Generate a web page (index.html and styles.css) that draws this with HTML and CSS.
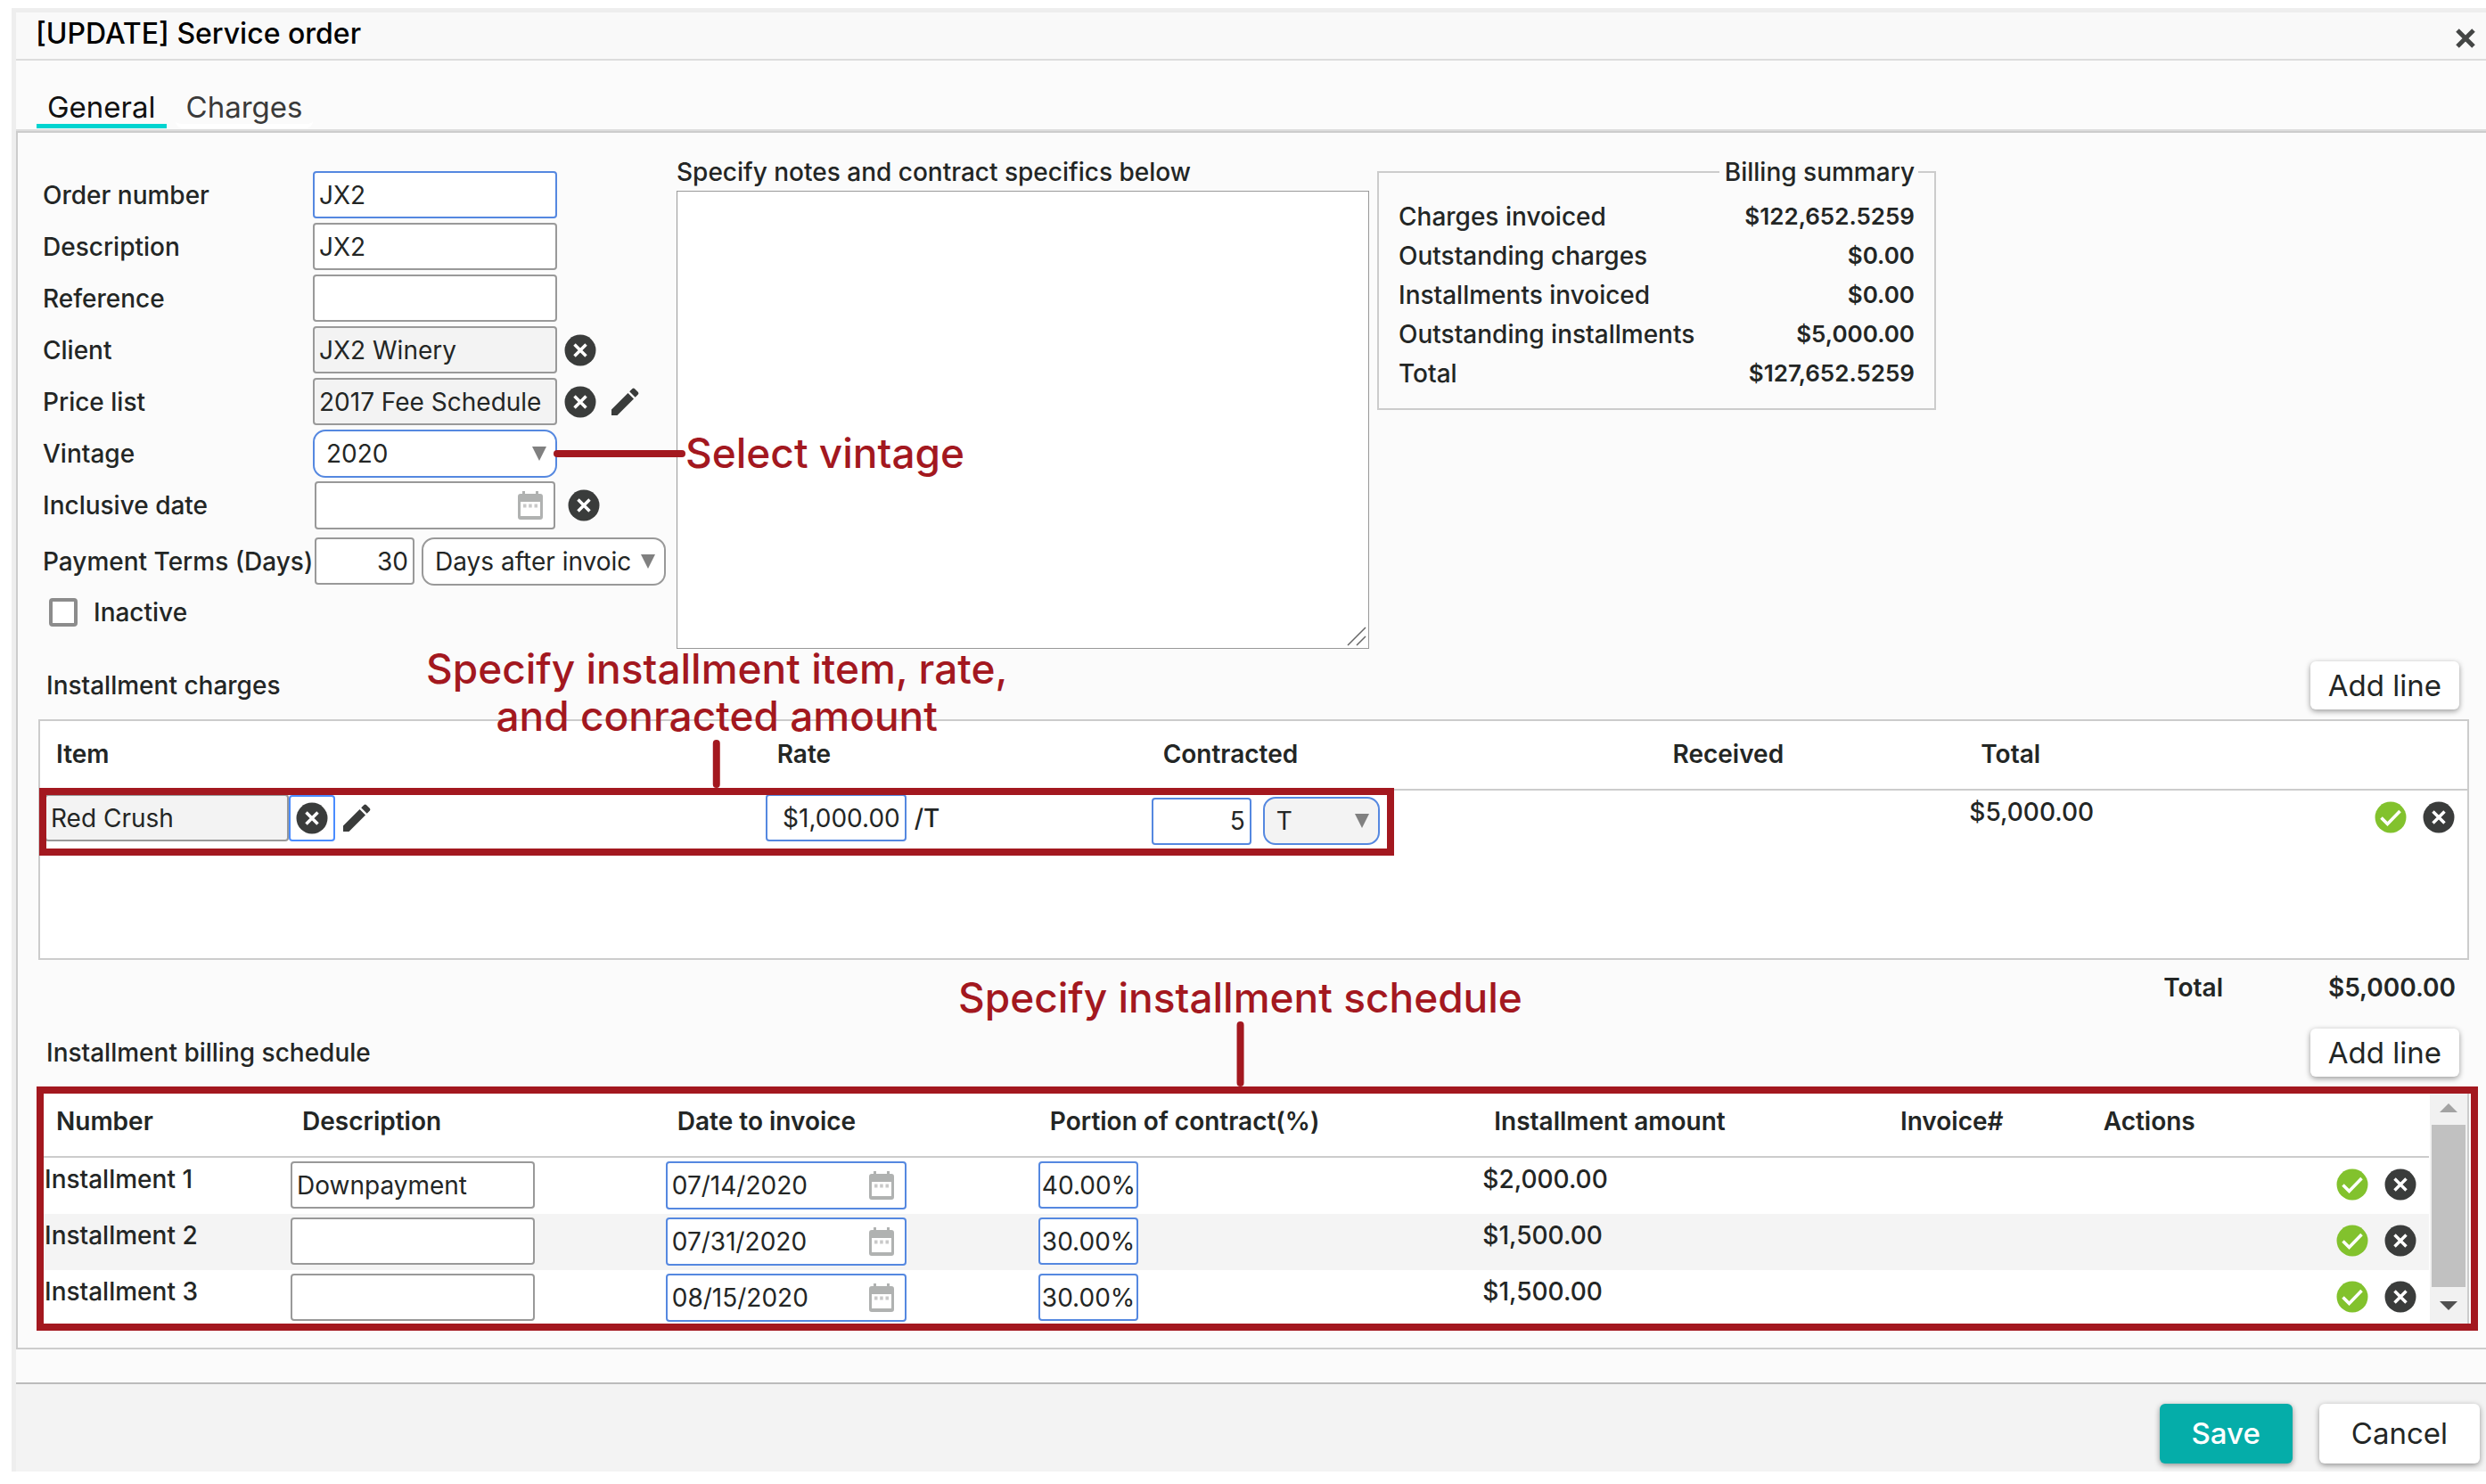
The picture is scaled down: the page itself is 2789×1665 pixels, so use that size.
FILE: index.html
```html
<!DOCTYPE html>
<html lang="en">
<head>
	<meta charset="UTF-8">
	<meta name="viewport" content="width=device-width, initial-scale=1.0">
	<title>Service order</title>
	<link rel="stylesheet" href="styles.css">
</head>
<body>
	<!-- shared icons -->
	<svg class="sprite" aria-hidden="true">
		<symbol id="i-remove" viewBox="0 0 36 36">
			<circle cx="18" cy="18" r="17.5" fill="#3a3c3b"/>
			<path d="M11.5 11.5l13 13M24.5 11.5l-13 13" stroke="#fff" stroke-width="3.500" fill="none"/>
		</symbol>
		<symbol id="i-ok" viewBox="0 0 36 36">
			<circle cx="18" cy="18" r="17.5" fill="#82c22d"/>
			<path d="M7.5 18.5l7 7L28.500 11" stroke="#fff" stroke-width="3.600" fill="none"/>
		</symbol>
		<symbol id="i-edit" viewBox="0 0 32 32">
			<path d="M1 31v-6.500L19.500 6l6.500 6.500L7.500 31zM21.200 4.300L24.500 1q1.200-1 2.400 0l4 4q1.100 1.200 0 2.400l-3.200 3.300z" fill="#3a3c3b"/>
		</symbol>
		<symbol id="i-calendar" viewBox="0 0 28 32">
			<path d="M5 0h3v3h12V0h3v3h2q3 0 3 3v23q0 3-3 3H3q-3 0-3-3V6q0-3 3-3h2zM3 12v16h22V12z" fill="#b0b2b1"/>
			<path d="M6 14.500h3.500v4H6zM12.200 14.500h3.500v4h-3.500zM18.500 14.500H22v4h-3.500z" fill="#c9c9c9"/>
		</symbol>
	</svg>

	<div class="dialog">
		<header class="dialog-header">
			<h1 class="dialog-title">[UPDATE] Service order</h1>
			<button class="close-button" type="button" aria-label="Close">
				<svg viewBox="0 0 22 22"><path d="M2 2l18 18M20 2L2 20" stroke="#444645" stroke-width="5"/></svg>
			</button>
		</header>

		<nav class="tabs">
			<button class="tab active" type="button">General</button>
			<button class="tab" type="button">Charges</button>
		</nav>

		<main class="panel">
			<div class="top">
				<div class="form">
					<label for="orderNumber">Order number</label>
					<div class="control"><input class="field required" id="orderNumber" type="text" value="JX2"></div>

					<label for="description">Description</label>
					<div class="control"><input class="field" id="description" type="text" value="JX2"></div>

					<label for="reference">Reference</label>
					<div class="control"><input class="field" id="reference" type="text"></div>

					<label for="client">Client</label>
					<div class="control">
						<input class="field" id="client" type="text" value="JX2 Winery" readonly>
						<button class="icon-button" type="button" aria-label="Clear client"><svg><use href="#i-remove"/></svg></button>
					</div>

					<label for="priceList">Price list</label>
					<div class="control">
						<input class="field" id="priceList" type="text" value="2017 Fee Schedule" readonly>
						<button class="icon-button" type="button" aria-label="Clear price list"><svg><use href="#i-remove"/></svg></button>
						<button class="icon-button edit" type="button" aria-label="Edit price list"><svg><use href="#i-edit"/></svg></button>
					</div>

					<label for="vintage">Vintage</label>
					<div class="control">
						<span class="select required"><select id="vintage"><option>2020</option></select></span>
						<div class="callout callout-side"><span class="stem"></span>Select vintage</div>
					</div>

					<label for="inclusiveDate">Inclusive date</label>
					<div class="control date-control">
						<span class="date"><input class="field" id="inclusiveDate" type="text"><svg><use href="#i-calendar"/></svg></span>
						<button class="icon-button" type="button" aria-label="Clear date"><svg><use href="#i-remove"/></svg></button>
					</div>

					<label class="terms-label" for="terms">Payment Terms (Days)</label>
					<div class="control terms-control">
						<input class="field short number" id="terms" type="text" value="30">
						<span class="select"><select aria-label="Terms type"><option>Days after invoice</option></select></span>
					</div>

					<label class="check"><input type="checkbox"> Inactive</label>
				</div>

				<div class="notes">
					<label for="notes">Specify notes and contract specifics below</label>
					<textarea id="notes"></textarea>
					<svg class="grip" viewBox="0 0 22 22"><path d="M1 21L21 1M11 21L21 11" stroke="#666" stroke-width="1.500"/></svg>
				</div>

				<fieldset class="summary">
					<legend>Billing summary</legend>
					<dl>
						<dt>Charges invoiced</dt><dd>$122,652.5259</dd>
						<dt>Outstanding charges</dt><dd>$0.00</dd>
						<dt>Installments invoiced</dt><dd>$0.00</dd>
						<dt>Outstanding installments</dt><dd>$5,000.00</dd>
						<dt>Total</dt><dd>$127,652.5259</dd>
					</dl>
				</fieldset>
			</div>

			<div class="section-head">
				<h2>Installment charges</h2>
				<button class="button add-button" type="button">Add line</button>
			</div>
			<div class="grid-box">
				<table class="grid charges">
					<thead>
						<tr><th class="c-item">Item</th><th class="c-rate">Rate</th><th class="c-contracted">Contracted</th><th class="c-received">Received</th><th class="c-total">Total</th><th></th></tr>
					</thead>
					<tbody>
						<tr>
							<td>
								<div class="cell">
									<input class="field" type="text" value="Red Crush" aria-label="Item" readonly>
									<button class="icon-button focused" type="button" aria-label="Clear item"><svg><use href="#i-remove"/></svg></button>
									<button class="icon-button edit" type="button" aria-label="Edit item"><svg><use href="#i-edit"/></svg></button>
								</div>
							</td>
							<td>
								<div class="cell">
									<input class="field required rate number" type="text" value="$1,000.00" aria-label="Rate">
									<span class="unit">/T</span>
								</div>
							</td>
							<td>
								<div class="cell contracted">
									<input class="field required short number" type="text" value="5" aria-label="Contracted">
									<span class="select required unit-select"><select aria-label="Unit"><option>T</option></select></span>
								</div>
							</td>
							<td></td>
							<td>$5,000.00</td>
							<td>
								<div class="row-actions">
									<button class="icon-button" type="button" aria-label="Confirm"><svg><use href="#i-ok"/></svg></button>
									<button class="icon-button" type="button" aria-label="Remove"><svg><use href="#i-remove"/></svg></button>
								</div>
							</td>
						</tr>
					</tbody>
				</table>
				<div class="outline outline-item">
					<div class="callout callout-top">Specify installment item, rate,<br>and conracted amount<span class="stem"></span></div>
				</div>
			</div>
			<div class="total-row"><span>Total</span><span>$5,000.00</span></div>

			<div class="section-head">
				<h2>Installment billing schedule</h2>
				<button class="button add-button" type="button">Add line</button>
			</div>
			<div class="grid-box">
				<table class="grid schedule">
					<thead>
						<tr><th class="s-number">Number</th><th class="s-description">Description</th><th class="s-date">Date to invoice</th><th class="s-portion">Portion of contract(%)</th><th class="s-amount">Installment amount</th><th class="s-invoice">Invoice#</th><th>Actions</th></tr>
					</thead>
					<tbody>
						<tr>
							<td>Installment 1</td>
							<td><div class="cell"><input class="field" type="text" value="Downpayment" aria-label="Description"></div></td>
							<td><div class="cell"><span class="date"><input class="field required" type="text" value="07/14/2020" aria-label="Date to invoice"><svg><use href="#i-calendar"/></svg></span></div></td>
							<td><div class="cell"><input class="field required short percent" type="text" value="40.00%" aria-label="Portion"></div></td>
							<td>$2,000.00</td>
							<td></td>
							<td>
								<div class="row-actions">
									<button class="icon-button" type="button" aria-label="Confirm"><svg><use href="#i-ok"/></svg></button>
									<button class="icon-button" type="button" aria-label="Remove"><svg><use href="#i-remove"/></svg></button>
								</div>
							</td>
						</tr>
						<tr>
							<td>Installment 2</td>
							<td><div class="cell"><input class="field" type="text" aria-label="Description"></div></td>
							<td><div class="cell"><span class="date"><input class="field required" type="text" value="07/31/2020" aria-label="Date to invoice"><svg><use href="#i-calendar"/></svg></span></div></td>
							<td><div class="cell"><input class="field required short percent" type="text" value="30.00%" aria-label="Portion"></div></td>
							<td>$1,500.00</td>
							<td></td>
							<td>
								<div class="row-actions">
									<button class="icon-button" type="button" aria-label="Confirm"><svg><use href="#i-ok"/></svg></button>
									<button class="icon-button" type="button" aria-label="Remove"><svg><use href="#i-remove"/></svg></button>
								</div>
							</td>
						</tr>
						<tr>
							<td>Installment 3</td>
							<td><div class="cell"><input class="field" type="text" aria-label="Description"></div></td>
							<td><div class="cell"><span class="date"><input class="field required" type="text" value="08/15/2020" aria-label="Date to invoice"><svg><use href="#i-calendar"/></svg></span></div></td>
							<td><div class="cell"><input class="field required short percent" type="text" value="30.00%" aria-label="Portion"></div></td>
							<td>$1,500.00</td>
							<td></td>
							<td>
								<div class="row-actions">
									<button class="icon-button" type="button" aria-label="Confirm"><svg><use href="#i-ok"/></svg></button>
									<button class="icon-button" type="button" aria-label="Remove"><svg><use href="#i-remove"/></svg></button>
								</div>
							</td>
						</tr>
					</tbody>
				</table>
				<div class="scrollbar" aria-hidden="true">
					<span class="arrow up"></span>
					<span class="thumb"></span>
					<span class="arrow down"></span>
				</div>
				<div class="outline outline-schedule">
					<div class="callout callout-top">Specify installment schedule<span class="stem"></span></div>
				</div>
			</div>
		</main>

		<footer class="dialog-footer">
			<button class="button save-button" type="submit">Save</button>
			<button class="button" type="button">Cancel</button>
		</footer>
	</div>
</body>
</html>
```

FILE: styles.css
```css
* {
	box-sizing: border-box;
}
body {
	margin: 0;
	background-color: #ffffff;
	color: #232625;
	font-family: Inter, "Open Sans", sans-serif;
	font-size: 28px;
	font-weight: 500;
	line-height: 32px;
	overflow-x: hidden;
}
button, input, select, textarea {
	font: inherit;
	color: inherit;
	margin: 0;
}
button {
	padding: 0;
	border: 0;
	background: none;
}
.sprite {
	display: none;
}

/* dialog */
.dialog {
	margin: 9px 0 0 13px;
	border: solid #eeeeee;
	border-width: 5px 0 0 5px;
	background-color: #fbfbfb;
}
.dialog-header {
	display: flex;
	justify-content: space-between;
	height: 54px;
	padding: 0 10px 0 22px;
	background-color: #f9f9f9;
	border-bottom: 2px solid #dddddd;
}
.dialog-title {
	margin: 0;
	font-size: 32px;
	font-weight: 500;
	line-height: 48px;
	color: #000000;
}
.close-button {
	display: flex;
	padding: 18px 2px 0;
}
.close-button svg {
	width: 22px;
	height: 22px;
}
.tabs {
	display: flex;
	gap: 10px;
	padding: 33px 23px 1px;
	border-bottom: 2px solid #dddddd;
}
.tab {
	padding: 0 12px;
	border-bottom: 5px solid #ffffff;
	border-radius: 0 0 8px 8px;
	font-size: 33px;
	font-weight: 400;
	line-height: 38px;
	color: #3a3a3a;
}
.tab.active {
	border-color: #00d4d0;
	border-radius: 0;
	color: #111111;
}
.panel {
	padding: 28px 19px 22px 23px;
	border: solid #cccccc;
	border-width: 2px 0 2px 2px;
	margin-bottom: 37px;
}

/* fields */
.field, .select select {
	height: 53px;
	width: 274px;
	padding: 0 5px;
	border: 2px solid #999999;
	border-radius: 4px;
	background-color: #ffffff;
	font-weight: 400;
	outline: none;
}
.field[readonly] {
	background-color: #f3f3f3;
}
.field.required, .select.required select {
	border-color: #5588e0;
}
.field.short {
	width: 112px;
}
.field.percent {
	padding: 0 2px;
}
.field.rate {
	width: 158px;
}
.field.number {
	text-align: right;
}
.select {
	position: relative;
	display: flex;
}
.select select {
	appearance: none;
	height: 54px;
	padding: 0 38px 0 13px;
	border-radius: 14px;
}
.select::after {
	content: "";
	position: absolute;
	right: 12px;
	top: 19px;
	border: solid transparent;
	border-width: 16px 8px 0;
	border-top-color: #808080;
}
.select.unit-select select {
	width: 131px;
	background-color: #f3f3f3;
}
.date {
	position: relative;
	display: flex;
}
.date .field {
	width: 270px;
	height: 54px;
}
.date svg {
	position: absolute;
	right: 14px;
	top: 11px;
	width: 28px;
	height: 32px;
}
.icon-button {
	display: flex;
}
.icon-button svg {
	width: 36px;
	height: 36px;
}
.icon-button.edit svg {
	width: 32px;
	height: 32px;
}
.icon-button.focused {
	padding: 6px;
	border: 2px solid #4a8cff;
	border-radius: 4px;
}

/* top area */
.top {
	display: grid;
	grid-template-columns: 711px 777fr 636fr 598fr;
	align-items: start;
	padding-left: 5px;
}
.form {
	display: grid;
	grid-template-columns: 303px 1fr;
	row-gap: 5px;
	align-items: center;
	margin-top: 15px;
	white-space: nowrap;
}
.control {
	position: relative;
	display: flex;
	align-items: center;
	gap: 8px;
	height: 53px;
}
.control .edit {
	margin-left: 8px;
}
.date-control {
	gap: 14px;
	padding-left: 2px;
}
.terms-control {
	margin-top: 5px;
	padding-left: 2px;
}
.terms-label {
	margin-top: 5px;
}
.check {
	grid-column: 1 / -1;
	display: flex;
	align-items: center;
	gap: 18px;
	padding: 10px 7px;
}
.check input {
	appearance: none;
	width: 32px;
	height: 32px;
	border: 4px solid #8c8c8c;
	border-radius: 4px;
	background-color: #ffffff;
}
.notes {
	position: relative;
	display: flex;
	flex-direction: column;
	gap: 5px;
}
.notes textarea {
	height: 514px;
	padding: 5px;
	border: 1px solid #999999;
	background-color: #ffffff;
	resize: none;
}
.notes .grip {
	position: absolute;
	right: 3px;
	bottom: 3px;
	width: 22px;
	height: 22px;
}
.summary {
	margin: 0 0 0 9px;
	padding: 12px 22px 17px;
	border: 2px solid #cccccc;
}
.summary legend {
	margin: 0 -4px 0 auto;
	padding: 0 4px 0 6px;
}
.summary dl {
	display: grid;
	grid-template-columns: 1fr auto;
	margin: 0;
	line-height: 44px;
}
.summary dd {
	margin: 0;
	font-size: 26px;
	font-weight: 600;
	text-align: right;
}

/* grids */
.section-head {
	display: flex;
	justify-content: space-between;
	align-items: center;
	margin: 14px 11px 11px 9px;
}
.section-head h2 {
	margin: 0;
	font-size: 28px;
	font-weight: 500;
}
.button {
	padding: 0 36px;
	border-radius: 6px;
	background-color: #ffffff;
	box-shadow: 0 2px 6px rgba(0, 0, 0, 0.4);
	font-size: 33px;
	font-weight: 400;
	line-height: 67px;
}
.add-button {
	padding: 0 20px;
	line-height: 54px;
}
.save-button {
	background-color: #05ada9;
	color: #ffffff;
	font-weight: 500;
}
.grid-box {
	position: relative;
	display: flex;
	align-items: flex-start;
	min-height: 270px;
	border: 2px solid #cccccc;
	background-color: #ffffff;
}
.grid {
	flex: 1;
	table-layout: fixed;
	border-collapse: separate;
	border-spacing: 0;
	white-space: nowrap;
}
.grid th {
	height: 78px;
	padding: 0 0 2px 18px;
	border-bottom: 2px solid #cccccc;
	font-weight: 600;
	text-align: left;
}
.grid td {
	height: 63px;
	padding: 4px 0 0 5px;
	line-height: 40px;
	vertical-align: top;
}
.schedule tbody tr:nth-child(even) {
	background-color: #f4f4f4;
}
.c-item { width: 29.7%; }
.c-rate { width: 15.9%; }
.c-contracted { width: 21%; }
.c-received { width: 12.7%; }
.c-total { width: 12.7%; }
.s-number { width: 10.3%; }
.s-description { width: 15.7%; }
.s-date { width: 15.6%; }
.s-portion { width: 18.6%; }
.s-amount { width: 17%; }
.s-invoice { width: 8.5%; }
.cell {
	display: flex;
	align-items: center;
}
.cell .edit {
	margin-left: 8px;
}
.cell .unit {
	margin-left: 9px;
}
.contracted {
	gap: 13px;
	padding-top: 3px;
}
.row-actions {
	display: flex;
	justify-content: flex-end;
	gap: 18px;
	padding: 8px 14px 0 0;
}
.total-row {
	display: flex;
	justify-content: flex-end;
	gap: 118px;
	padding-right: 15px;
	font-weight: 600;
	line-height: 63px;
}
.scrollbar {
	align-self: stretch;
	display: flex;
	flex-direction: column;
	align-items: center;
	width: 43px;
	padding: 11px 0 18px;
	border-left: 1px solid #ffffff;
	background-color: #f1f1f1;
}
.thumb {
	flex: 1;
	width: 38px;
	margin: 14px 0 16px;
	background-color: #c1c1c1;
}
.arrow {
	border: solid transparent;
}
.arrow.up {
	margin-top: 6px;
	border-width: 0 10px 10px;
	border-bottom-color: #a3a3a3;
}
.arrow.down {
	border-width: 10px 10px 0;
	border-top-color: #505050;
}

/* training callouts drawn over the form */
.outline {
	position: absolute;
	border: 8px solid #a3181f;
	pointer-events: none;
}
.outline-item {
	left: -1px;
	right: 44.2%;
	top: 75px;
	height: 76px;
}
.outline-schedule {
	left: -4px;
	right: -12px;
	top: -2px;
	bottom: -5px;
}
.callout {
	position: absolute;
	display: flex;
	align-items: center;
	color: #a3181f;
	font-size: 46px;
	line-height: 53px;
	text-align: center;
	white-space: nowrap;
}
.callout .stem {
	border-radius: 4px;
	background-color: #a3181f;
}
.callout-side {
	left: 270px;
	z-index: 1;
}
.callout-side .stem {
	width: 148px;
	height: 8px;
}
.callout-top {
	display: block;
	left: 50%;
	bottom: calc(100% + 8px);
	transform: translateX(-50%);
}
.callout-top .stem {
	display: block;
	width: 8px;
	height: 54px;
	margin: 0 auto;
}
.outline-schedule .callout-top {
	left: 49.3%;
}
.outline-schedule .stem {
	height: 73px;
}

.dialog-footer {
	display: flex;
	justify-content: flex-end;
	gap: 30px;
	padding: 22px 7px 9px;
	border-top: 2px solid #bbbbbb;
	background-color: #f3f3f3;
}
```
